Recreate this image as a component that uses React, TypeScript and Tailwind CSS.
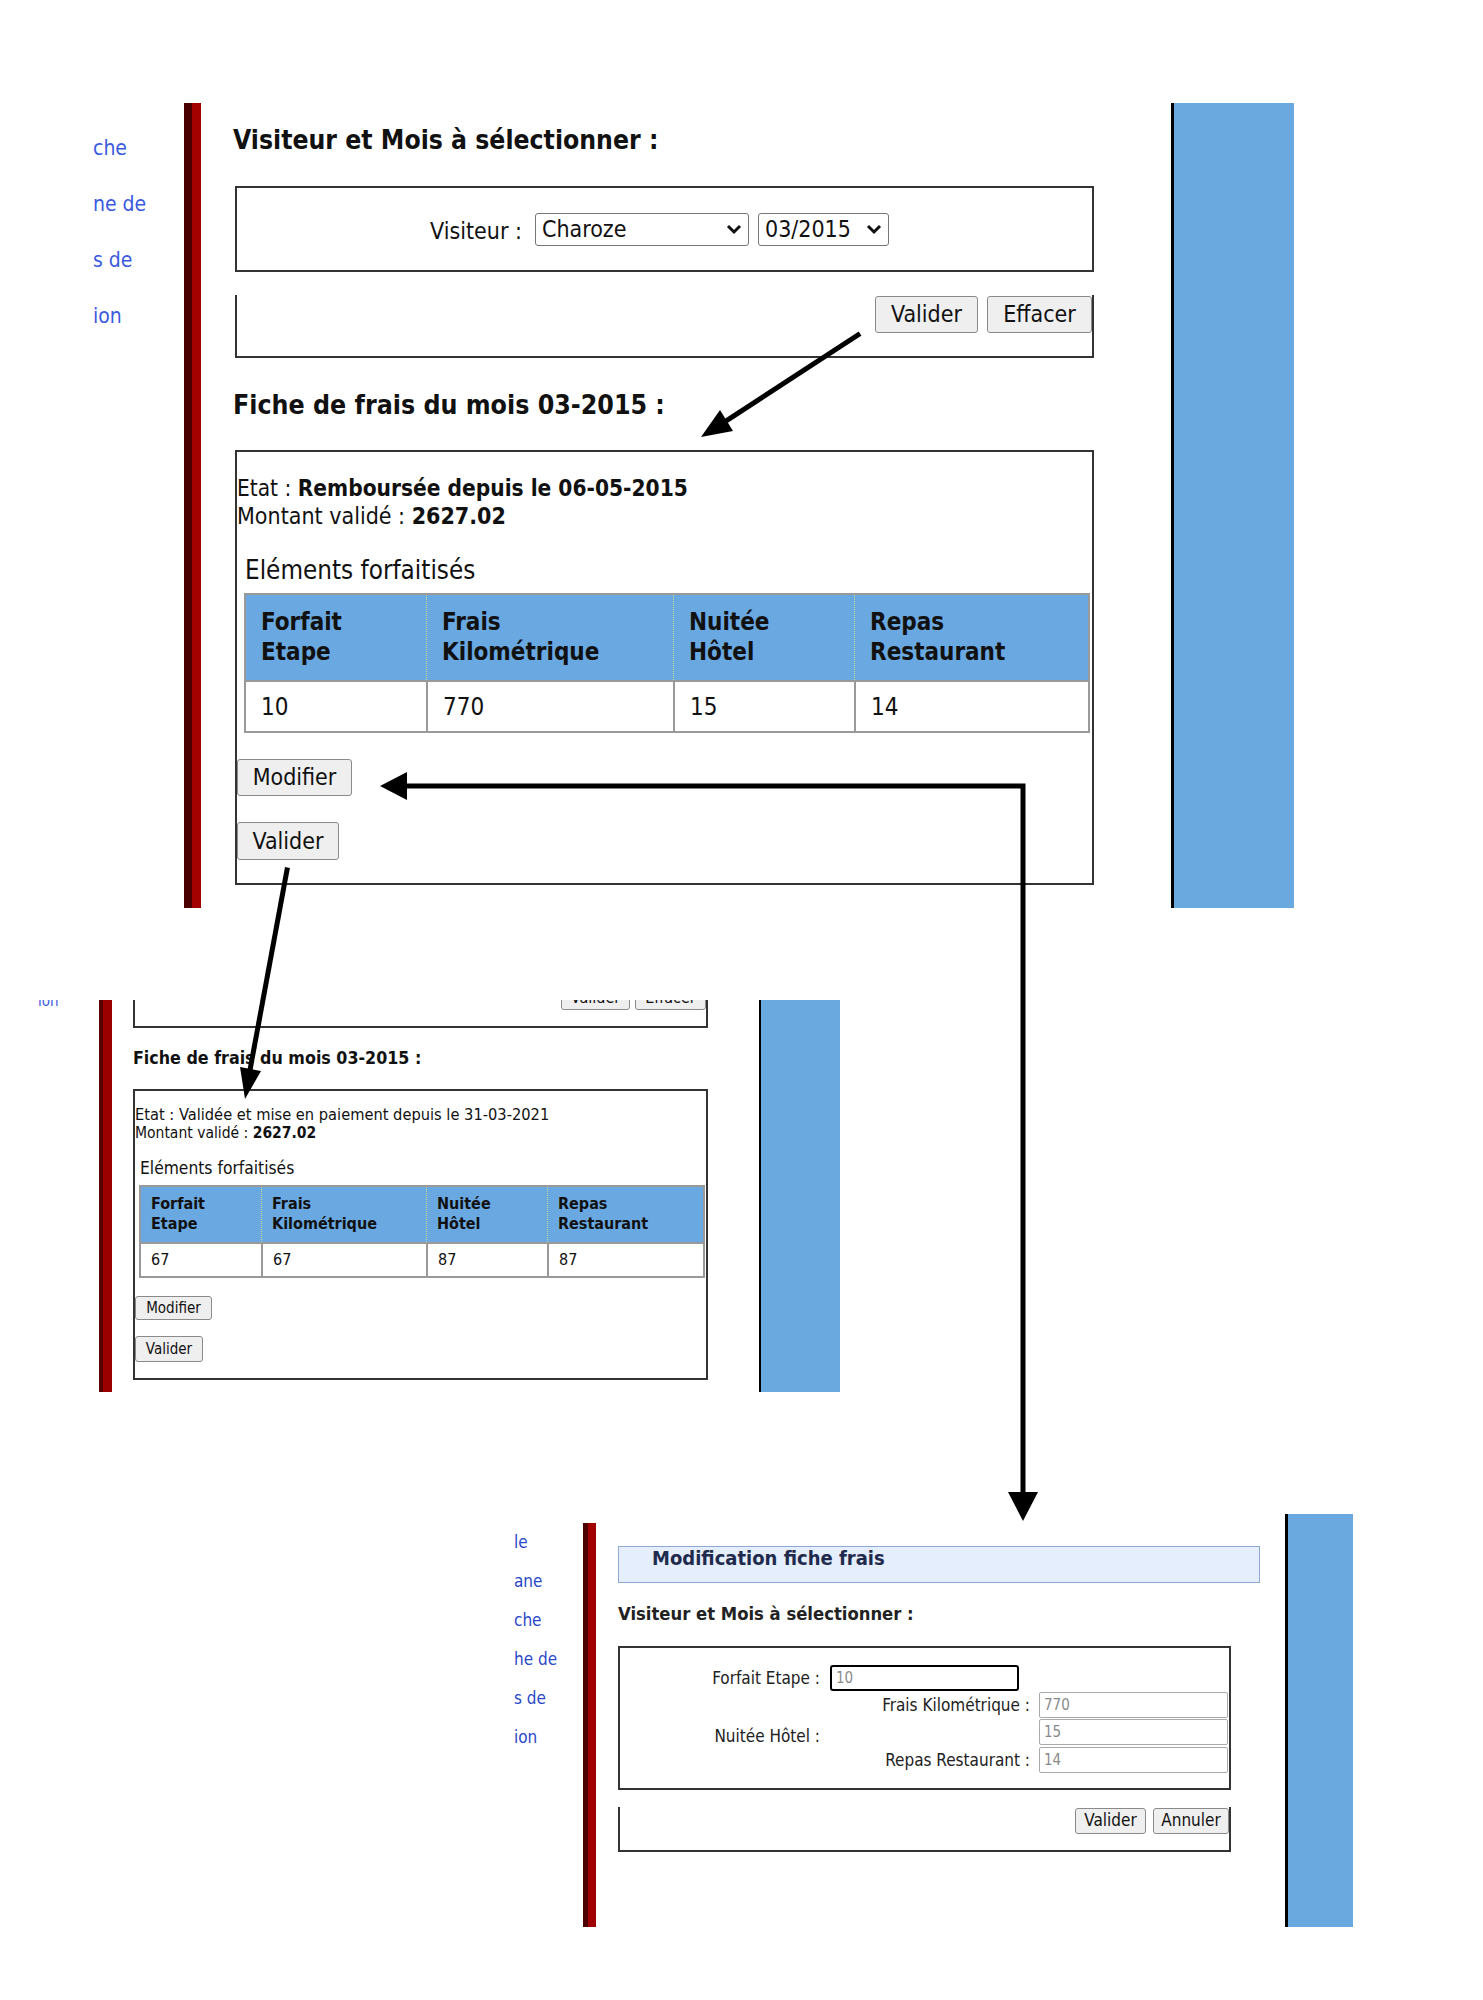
import React from "react";

const btn =
  "bg-[#efefef] border border-[#8a8a8a] rounded-[3px] text-[#111] flex items-center justify-center shrink-0";

function Select({ w, text }: { w: string; text: string }) {
  return (
    <div
      className={`${w} h-[33px] border border-[#767676] rounded-[3px] bg-white flex items-center justify-between pl-[6px] pr-[6px] text-[23px] leading-none`}
    >
      <span>{text}</span>
      <svg width="16" height="12" viewBox="0 0 16 12">
        <polyline points="2,3 8,9 14,3" fill="none" stroke="#111" strokeWidth="3" />
      </svg>
    </div>
  );
}

function Panel1() {
  const cols = [
    ["Forfait", "Etape", "10"],
    ["Frais", "Kilométrique", "770"],
    ["Nuitée", "Hôtel", "15"],
    ["Repas", "Restaurant", "14"],
  ];
  return (
    <div className="absolute left-[83px] top-[103px] w-[1211px] h-[805px] flex">
      <div className="w-[101px] shrink-0 pl-[10px] pt-[31px] flex flex-col gap-[28px] text-[21px] leading-[28px] text-[#3a5ae0] overflow-hidden">
        <span>che</span>
        <span>ne de</span>
        <span>s de</span>
        <span>ion</span>
      </div>
      <div className="w-[17px] shrink-0 h-full border-l-[8px] border-[#4a0000] bg-[#a30000]" />
      <div className="w-[970px] shrink-0 pl-[34px] pr-[77px] flex flex-col">
        <div className="-ml-[2px] mt-[22px] text-[26.3px] font-bold leading-[30px]">
          Visiteur et Mois à sélectionner :
        </div>
        <div className="mt-[31px] h-[86px] border-2 border-[#333] flex items-center justify-center pr-[10px]">
          <span className="text-[23px] mt-[4px]">Visiteur :</span>
          <div className="ml-[13px]">
            <Select w="w-[214px]" text="Charoze" />
          </div>
          <div className="ml-[9px]">
            <Select w="w-[131px]" text="03/2015" />
          </div>
        </div>
        <div className="mt-[23px] h-[63px] border-x-2 border-b-2 border-[#333] flex justify-end items-start gap-[9px] pt-[1px]">
          <div className={`${btn} w-[103px] h-[37px] text-[23px]`}>Valider</div>
          <div className={`${btn} w-[105px] h-[37px] text-[23px]`}>Effacer</div>
        </div>
        <div className="-ml-[2px] mt-[32px] text-[26.5px] font-bold leading-[30px]">
          Fiche de frais du mois 03-2015 :
        </div>
        <div className="mt-[30px] h-[435px] border-2 border-[#333] flex flex-col items-start pt-[22px]">
          <div className="text-[22.5px] leading-[28px]">
            Etat : <span className="font-bold">Remboursée depuis le 06-05-2015</span>
          </div>
          <div className="text-[23px] leading-[28px]">
            Montant validé : <span className="font-bold">2627.02</span>
          </div>
          <div className="mt-[26px] pl-[8px] text-[25.8px] leading-[28px]">Eléments forfaitisés</div>
          <div className="mt-[9px] ml-[7px] w-[846px] border-2 border-[#999] grid grid-cols-[180px_247px_181px_234px]">
            {cols.map((c, i) => (
              <div
                key={"h" + i}
                className={`h-[85px] bg-[#69a8e1] pl-[15px] pt-[12px] text-[24px] font-bold leading-[30px] ${
                  i > 0 ? "border-l border-dotted border-[#c9dc8a]" : ""
                }`}
              >
                <div>{c[0]}</div>
                <div>{c[1]}</div>
              </div>
            ))}
            {cols.map((c, i) => (
              <div
                key={"b" + i}
                className={`h-[51px] border-t-2 border-[#999] pl-[15px] flex items-center text-[24px] ${
                  i > 0 ? "border-l-2" : ""
                }`}
              >
                {c[2]}
              </div>
            ))}
          </div>
          <div className={`${btn} mt-[26px] w-[115px] h-[37px] text-[23px]`}>Modifier</div>
          <div className={`${btn} mt-[26px] w-[102px] h-[38px] text-[23px]`}>Valider</div>
        </div>
      </div>
      <div className="w-[3px] shrink-0 h-full bg-black" />
      <div className="w-[120px] shrink-0 h-full bg-[#6aa8e0]" />
    </div>
  );
}

function Panel2() {
  const cols = [
    ["Forfait", "Etape", "67"],
    ["Frais", "Kilométrique", "67"],
    ["Nuitée", "Hôtel", "87"],
    ["Repas", "Restaurant", "87"],
  ];
  return (
    <div className="absolute left-[38px] top-[1000px] w-[802px] h-[392px] flex overflow-hidden">
      <div className="w-[61px] shrink-0 text-[15px] leading-[14px] text-[#3a5ae0] overflow-hidden">
        <div className="-mt-[6px]">ion</div>
      </div>
      <div className="w-[13px] shrink-0 h-full border-l-[4px] border-[#5a0000] bg-[#9a0000]" />
      <div className="w-[647px] shrink-0 pl-[21px] pr-[51px] flex flex-col">
        <div className="-mt-[20px] h-[48px] border-x-2 border-b-2 border-[#333] flex justify-end items-start gap-[5px] pt-[5px]">
          <div className={`${btn} w-[69px] h-[25px] text-[16px]`}>Valider</div>
          <div className={`${btn} w-[71px] h-[25px] text-[16px]`}>Effacer</div>
        </div>
        <div className="mt-[20px] text-[17.7px] font-bold leading-[20px]">
          Fiche de frais du mois 03-2015 :
        </div>
        <div className="mt-[21px] h-[291px] border-2 border-[#333] flex flex-col items-start pt-[15px]">
          <div className="text-[16.3px] leading-[18px]">
            Etat : Validée et mise en paiement depuis le 31-03-2021
          </div>
          <div className="text-[15.5px] leading-[18px]">
            Montant validé : <span className="font-bold">2627.02</span>
          </div>
          <div className="mt-[17px] pl-[5px] text-[17.3px] leading-[18px]">Eléments forfaitisés</div>
          <div className="mt-[8px] ml-[4px] w-[566px] border-2 border-[#999] grid grid-cols-[120px_165px_121px_156px]">
            {cols.map((c, i) => (
              <div
                key={"h" + i}
                className={`h-[55px] bg-[#69a8e1] pl-[10px] pt-[7px] text-[16px] font-bold leading-[20px] ${
                  i > 0 ? "border-l border-dotted border-[#c9dc8a]" : ""
                }`}
              >
                <div>{c[0]}</div>
                <div>{c[1]}</div>
              </div>
            ))}
            {cols.map((c, i) => (
              <div
                key={"b" + i}
                className={`h-[34px] border-t-2 border-[#999] pl-[10px] flex items-center text-[16px] ${
                  i > 0 ? "border-l-2" : ""
                }`}
              >
                {c[2]}
              </div>
            ))}
          </div>
          <div className={`${btn} mt-[18px] w-[77px] h-[24px] text-[15px]`}>Modifier</div>
          <div className={`${btn} mt-[16px] w-[68px] h-[26px] text-[15px]`}>Valider</div>
        </div>
      </div>
      <div className="w-[2px] shrink-0 h-full bg-black" />
      <div className="w-[79px] shrink-0 h-full bg-[#6aa8e0]" />
    </div>
  );
}

function Panel3() {
  const input = "h-[26px] w-[189px] shrink-0 bg-white flex items-center pl-[4px] text-[15px] text-[#8a8a8a]";
  return (
    <div className="absolute left-[514px] top-[1514px] w-[839px] h-[413px] flex">
      <div className="w-[69px] shrink-0 pt-[17px] flex flex-col gap-[17px] text-[17px] leading-[22px] text-[#2a48c8] overflow-hidden">
        <span>le</span>
        <span>ane</span>
        <span>che</span>
        <span>he de</span>
        <span>s de</span>
        <span>ion</span>
      </div>
      <div className="w-[13px] shrink-0 mt-[9px] border-l-[5px] border-[#4d0000] bg-[#a00000]" />
      <div className="w-[689px] shrink-0 pl-[22px] pr-[25px] flex flex-col">
        <div className="mt-[32px] h-[37px] border border-[#8eaad4] bg-[#e4eefc] pl-[33px] text-[20px] font-bold leading-[22px] text-[#1f2a4d]">
          Modification fiche frais
        </div>
        <div className="mt-[20px] text-[18.3px] font-bold leading-[22px] text-[#222]">
          Visiteur et Mois à sélectionner :
        </div>
        <div className="mt-[21px] w-[613px] h-[144px] border-2 border-[#333] pt-[17px] text-[17px] text-[#222] flex flex-col">
          <div className="h-[27px] flex items-start">
            <span className="w-[200px] text-right leading-[26px]">Forfait Etape :</span>
            <div className={`${input} ml-[10px] border-2 border-black rounded-[3px]`}>10</div>
          </div>
          <div className="h-[27px] flex items-start">
            <span className="w-[410px] text-right leading-[26px]">Frais Kilométrique :</span>
            <div className={`${input} ml-[9px] border border-[#aaa] rounded-[2px]`}>770</div>
          </div>
          <div className="h-[28px] flex items-start">
            <span className="w-[200px] text-right leading-[26px] mt-[4px]">Nuitée Hôtel :</span>
            <div className={`${input} ml-[219px] border border-[#aaa] rounded-[2px]`}>15</div>
          </div>
          <div className="h-[27px] flex items-start">
            <span className="w-[410px] text-right leading-[26px]">Repas Restaurant :</span>
            <div className={`${input} ml-[9px] border border-[#aaa] rounded-[2px]`}>14</div>
          </div>
        </div>
        <div className="mt-[17px] w-[613px] h-[45px] border-x-2 border-b-2 border-[#333] flex justify-end items-start gap-[7px] pt-[1px]">
          <div className={`${btn} w-[71px] h-[26px] text-[17px]`}>Valider</div>
          <div className={`${btn} w-[76px] h-[26px] text-[17px]`}>Annuler</div>
        </div>
      </div>
      <div className="w-[3px] shrink-0 h-full bg-black" />
      <div className="w-[65px] shrink-0 h-full bg-[#6aa8e0]" />
    </div>
  );
}

function Arrows() {
  return (
    <svg className="absolute left-0 top-0 pointer-events-none" width="1483" height="2000" viewBox="0 0 1483 2000">
      <g stroke="#000" strokeWidth="5" fill="none" strokeLinecap="square">
        <line x1="858" y1="335" x2="726" y2="421" />
        <polyline points="1023,1494 1023,786 404,786" />
        <line x1="287" y1="870" x2="250" y2="1070" />
      </g>
      <g fill="#000">
        <polygon points="701,437 733,431 720,410" />
        <polygon points="380,786 407,772 407,800" />
        <polygon points="1023,1521 1008,1492 1038,1492" />
        <polygon points="245,1099 261,1071 240,1067" />
      </g>
    </svg>
  );
}

export default function App() {
  return (
    <div className="relative w-[1483px] h-[2000px] bg-white overflow-hidden font-['DejaVu_Sans_Condensed','DejaVu_Sans',sans-serif] [font-stretch:condensed] text-[#111]">
      <Panel1 />
      <Panel2 />
      <Panel3 />
      <Arrows />
    </div>
  );
}
